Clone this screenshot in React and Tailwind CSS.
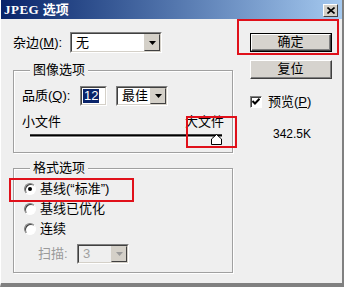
import React from 'react'

const font = { fontFamily: '"Liberation Sans", "Noto Sans CJK SC", sans-serif' }

function Sunken({ className = '', children }) {
  return (
    <div className={`border border-t-[#808080] border-l-[#808080] border-b-white border-r-white ${className}`}>
      <div className="w-full h-full border border-t-[#404040] border-l-[#404040] border-b-[#d4d0c8] border-r-[#d4d0c8] flex items-center">
        {children}
      </div>
    </div>
  )
}

function ArrowBtn({ disabled }) {
  return (
    <div className="w-[16px] h-full bg-[#d4d0c8] border border-t-[#d4d0c8] border-l-[#d4d0c8] border-b-[#404040] border-r-[#404040] flex items-center justify-center">
      <svg width="7" height="4" viewBox="0 0 7 4">
        <polygon points="0,0 7,0 3.5,4" fill={disabled ? '#9a9a9a' : '#000'} />
      </svg>
    </div>
  )
}

function Select({ value, className = '', disabled }) {
  return (
    <Sunken className={className}>
      <div className={`flex-1 h-full flex items-center pl-[4px] ${disabled ? 'bg-[#efefef] text-[#a0a0a0]' : 'bg-white'}`}>
        {value}
      </div>
      <ArrowBtn disabled={disabled} />
    </Sunken>
  )
}

function Button({ children, isDefault }) {
  return (
    <div className={`w-[82px] h-[19px] ${isDefault ? 'border border-black' : ''}`}>
      <div className="w-full h-full bg-[#d6d3ce] border border-t-white border-l-white border-b-[#404040] border-r-[#404040]">
        <div className="w-full h-full border-b border-r border-[#808080] flex items-center justify-center text-[13px]">
          {children}
        </div>
      </div>
    </div>
  )
}

function Radio({ checked, label }) {
  return (
    <div className="h-[20px] flex items-center">
      <div className="w-[12px] h-[12px] rounded-full border border-t-[#808080] border-l-[#808080] border-b-white border-r-white bg-white shadow-[inset_1px_1px_0_#404040] flex items-center justify-center">
        {checked && <div className="w-[4px] h-[4px] rounded-full bg-black" />}
      </div>
      <span className="ml-[4px] text-[13px]">{label}</span>
    </div>
  )
}

function Group({ title, className = '', children }) {
  return (
    <div className={`relative border border-[#a0a0a0] shadow-[1px_1px_0_#fff,inset_1px_1px_0_#fff] ${className}`}>
      <span className="absolute left-[16px] -top-[9px] px-[3px] bg-[#efefef] leading-[16px] text-[13px]">{title}</span>
      {children}
    </div>
  )
}

export default function App() {
  return (
    <div className="relative w-[344px] h-[287px] bg-[#efefef] overflow-hidden text-[12px] text-black flex flex-col border-l border-l-white border-r-2 border-r-[#808080] border-b-4 border-b-[#808080]" style={font}>
      {/* title bar */}
      <div className="h-[19px] shrink-0 bg-linear-to-r from-[#0a246a] to-[#a6caf0] flex items-end justify-between pl-[3px] pr-[4px] pb-[1px]">
        <span className="text-white font-bold text-[13px] leading-[16px]">
          <span className="font-['Liberation_Serif'] tracking-[0.5px]">JPEG</span> 选项
        </span>
        <div className="w-[15px] h-[13px] mb-[1px] bg-[#d4d0c8] border border-t-white border-l-white border-b-[#404040] border-r-[#404040] flex items-center justify-center">
          <svg width="8" height="7" viewBox="0 0 8 7">
            <path d="M0.5 0.5 L7.5 6.5 M7.5 0.5 L0.5 6.5" stroke="#000" strokeWidth="1.6" />
          </svg>
        </div>
      </div>

      {/* body */}
      <div className="flex-1 flex pl-[12px] pt-[13px]">
        <div className="w-[220px] flex flex-col">
          <div className="h-[21px] flex items-center">
            <span className="w-[57px] text-[13px]">杂边(<span className="underline">M</span>):</span>
            <Select value={<span className="text-[13px]">无</span>} className="w-[92px] h-[21px]" />
          </div>

          <Group title="图像选项" className="mt-[17px] h-[83px]">
            <div className="pt-[15px] pl-[8px]">
              <div className="h-[20px] flex items-center">
                <span className="w-[58px] text-[13px]">品质(<span className="underline">Q</span>):</span>
                <Sunken className="w-[27px] h-[20px]">
                  <div className="w-full h-full bg-white flex items-center pl-[1px]">
                    <span className="bg-[#0a246a] text-white text-[13px] leading-[14px] px-[1px]">12</span>
                  </div>
                </Sunken>
                <Select value={<span className="text-[13px]">最佳</span>} className="w-[52px] h-[20px] ml-[9px]" />
              </div>
              <div className="mt-[9px] flex justify-between pr-[8px] leading-[14px] text-[13px]">
                <span>小文件</span>
                <span>大文件</span>
              </div>
              <div className="relative ml-[8px] w-[192px] h-[11px] mt-[1px]">
                <div className="mt-[5px] h-[4px] border-t border-t-[#404040] border-b border-b-white">
                  <div className="h-full border-t border-t-black border-b border-b-[#808080]" />
                </div>
                <svg className="absolute right-0 top-0" width="11" height="11" viewBox="0 0 11 11">
                  <polygon points="0.5,5 5.5,0.5 10.5,5 10.5,10.5 0.5,10.5" fill="#fff" stroke="#000" />
                </svg>
              </div>
            </div>
          </Group>

          <Group title="格式选项" className="mt-[15px] h-[105px]">
            <div className="pt-[10px] pl-[10px]">
              <Radio checked label="基线(“标准”)" />
              <Radio label="基线已优化" />
              <Radio label="连续" />
              <div className="mt-[5px] h-[20px] flex items-center ml-[14px]">
                <span className="w-[39px] text-[13px] text-[#9a9a9a]">扫描:</span>
                <Select disabled value={<span className="text-[13px]">3</span>} className="w-[52px] h-[20px]" />
              </div>
            </div>
          </Group>
        </div>

        <div className="ml-[17px] flex flex-col">
          <div className="mt-[1px]">
            <Button isDefault>确定</Button>
          </div>
          <div className="mt-[8px]">
            <Button>复位</Button>
          </div>
          <div className="mt-[16px] flex items-center h-[13px]">
            <div className="w-[12px] h-[12px] bg-white border border-t-[#808080] border-l-[#808080] border-b-white border-r-white shadow-[inset_1px_1px_0_#404040] flex items-center justify-center">
              <svg width="8" height="7" viewBox="0 0 8 7">
                <path d="M0.5 3 L3 5.5 L7.5 0.8" fill="none" stroke="#000" strokeWidth="2" />
              </svg>
            </div>
            <span className="ml-[6px] text-[13px]">预览(<span className="underline">P</span>)</span>
          </div>
          <div className="mt-[17px] ml-[23px] text-[12px]">342.5K</div>
        </div>
      </div>

      {/* annotation frames */}
      <div className="absolute left-[236px] top-[19px] w-[102px] h-[36px] border-2 border-[#e0101a]" />
      <div className="absolute left-[185px] top-[116px] w-[51px] h-[32px] border-2 border-[#e0101a]" />
      <div className="absolute left-[8px] top-[178px] w-[125px] h-[24px] border-2 border-[#e0101a]" />
    </div>
  )
}
